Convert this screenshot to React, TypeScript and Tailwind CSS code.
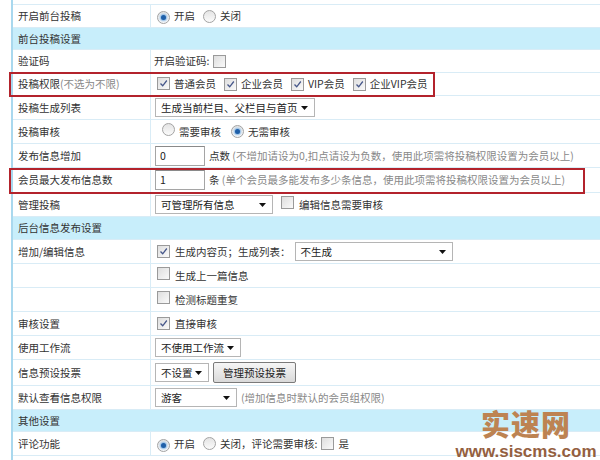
import React from 'react';

const FONT = '"Noto Sans CJK SC", "Liberation Sans", sans-serif';

function Radio({ checked = false }: { checked?: boolean }) {
  return (
    <span className="inline-flex h-[13px] w-[13px] shrink-0 items-center justify-center rounded-full border border-[#a3a3a3] bg-gradient-to-b from-[#e4e4e4] to-[#fbfbfb]">
      {checked && <span className="h-[5px] w-[5px] rounded-full bg-[#1f5fa8] shadow-[0_0_2px_1px_#7fb4e6]" />}
    </span>
  );
}

function Check({ checked = false }: { checked?: boolean }) {
  return (
    <span className="inline-flex h-[13px] w-[13px] shrink-0 items-center justify-center border border-[#9a9a9a] bg-gradient-to-br from-[#dedede] to-[#fafafa]">
      {checked && (
        <svg width="9" height="9" viewBox="0 0 9 9">
          <path d="M1.5 4.5 L3.7 6.8 L7.8 1.5" fill="none" stroke="#46578a" strokeWidth="1.3" />
        </svg>
      )}
    </span>
  );
}

function Select({ text, className }: { text: string; className: string }) {
  return (
    <span className={`inline-flex h-[19px] items-center justify-between border border-[#b5b5b5] bg-white pl-[5px] pr-[6px] text-[#222] ${className}`}>
      <span>{text}</span>
      <svg width="7" height="4" viewBox="0 0 7 4">
        <path d="M0 0 H7 L3.5 4 Z" fill="#111" />
      </svg>
    </span>
  );
}

function Input({ value }: { value: string }) {
  return (
    <span className="inline-flex h-[20px] w-[50px] items-center border border-[#a5a5a5] border-t-[#8a8a8a] bg-white pl-[4px] text-[#222]">
      {value}
    </span>
  );
}

function Row({ h, label, children }: { h: string; label?: React.ReactNode; children?: React.ReactNode }) {
  return (
    <div className={`flex border-b border-[#d9ecf6] ${h}`}>
      <div className="flex w-[138px] shrink-0 items-center border-r border-[#d9ecf6] pl-[5px]">{label}</div>
      <div className="flex flex-1 items-center gap-[4px] pl-[4px]">{children}</div>
    </div>
  );
}

function Header({ h, text }: { h: string; text: string }) {
  return (
    <div className={`flex items-center border-b border-[#d9ecf6] bg-[#c8eefb] pl-[5px] ${h}`}>{text}</div>
  );
}

export default function App() {
  return (
    <div className="relative h-[460px] w-[600px] overflow-hidden bg-white text-[10.5px] text-[#333]" style={{ fontFamily: FONT }}>
      <div className="ml-[11px] w-[620px] border-l-2 border-[#a9d8ee]">
        <div className="h-[5px] border-b border-[#d9ecf6]" />
        <Row h="h-[23px]" label="开启前台投稿">
          <span className="ml-[2px]"><Radio checked /></span>
          <span className="mr-[4px]">开启</span>
          <Radio />
          <span>关闭</span>
        </Row>
        <Header h="h-[22px]" text="前台投稿设置" />
        <Row h="h-[23px]" label="验证码">
          <span className="-ml-[1px]">开启验证码:</span>
          <Check />
        </Row>
        <Row
          h="h-[23px]"
          label={
            <span>
              投稿权限<span className="text-[#888]">(不选为不限)</span>
            </span>
          }
        >
          <span className="ml-[2px]"><Check checked /></span>
          <span className="mr-[4px]">普通会员</span>
          <Check checked />
          <span className="mr-[4px]">企业会员</span>
          <Check checked />
          <span className="mr-[4px]">VIP会员</span>
          <Check checked />
          <span>企业VIP会员</span>
        </Row>
        <Row h="h-[24px]" label="投稿生成列表">
          <Select text="生成当前栏目、父栏目与首页" className="w-[160px]" />
        </Row>
        <Row h="h-[24px]" label="投稿审核">
          <span className="ml-[7px]"><Radio /></span>
          <span className="mr-[6px]">需要审核</span>
          <Radio checked />
          <span>无需审核</span>
        </Row>
        <Row h="h-[24px]" label="发布信息增加">
          <Input value="0" />
          <span>
            点数 <span className="text-[#888]">(不增加请设为0,扣点请设为负数，使用此项需将投稿权限设置为会员以上)</span>
          </span>
        </Row>
        <Row h="h-[25px]" label="会员最大发布信息数">
          <Input value="1" />
          <span>
            条 <span className="text-[#888]">(单个会员最多能发布多少条信息，使用此项需将投稿权限设置为会员以上)</span>
          </span>
        </Row>
        <Row h="h-[24px]" label="管理投稿">
          <Select text="可管理所有信息" className="w-[118px]" />
          <span className="ml-[4px]"><Check /></span>
          <span className="ml-[1px]">编辑信息需要审核</span>
        </Row>
        <Header h="h-[23px]" text="后台信息发布设置" />
        <Row h="h-[24px]" label="增加/编辑信息">
          <span className="ml-[2px]"><Check checked /></span>
          <span className="ml-[1px]">生成内容页；生成列表：</span>
          <Select text="不生成" className="w-[158px]" />
        </Row>
        <Row h="h-[24px]">
          <span className="ml-[2px]"><Check /></span>
          <span className="ml-[1px]">生成上一篇信息</span>
        </Row>
        <Row h="h-[24px]">
          <span className="ml-[2px]"><Check /></span>
          <span className="ml-[1px]">检测标题重复</span>
        </Row>
        <Row h="h-[24px]" label="审核设置">
          <span className="ml-[2px]"><Check checked /></span>
          <span className="ml-[1px]">直接审核</span>
        </Row>
        <Row h="h-[24px]" label="使用工作流">
          <Select text="不使用工作流" className="w-[86px]" />
        </Row>
        <Row h="h-[26px]" label="信息预设投票">
          <Select text="不设置" className="w-[54px]" />
          <span className="inline-flex h-[21px] w-[83px] items-center justify-center rounded-[2px] border border-[#7a7a7a] bg-gradient-to-b from-[#f6f6f6] to-[#d9d9d9] text-[#222]">
            管理预设投票
          </span>
        </Row>
        <Row h="h-[24px]" label="默认查看信息权限">
          <Select text="游客" className="w-[82px]" />
          <span className="text-[#888]">(增加信息时默认的会员组权限)</span>
        </Row>
        <Header h="h-[22px]" text="其他设置" />
        <Row h="h-[24px]" label="评论功能">
          <span className="ml-[2px]"><Radio checked /></span>
          <span className="mr-[4px]">开启</span>
          <Radio />
          <span>关闭，评论需要审核:</span>
          <Check />
          <span>是</span>
        </Row>
        <div className="h-[10px]" />
      </div>

      <div className="pointer-events-none absolute left-[9px] top-[72px] h-[25px] w-[426px] border-2 border-[#b3232c]" />
      <div className="pointer-events-none absolute left-[9px] top-[168px] h-[26px] w-[576px] border-2 border-[#b3232c]" />

      <div className="pointer-events-none absolute left-[455px] top-[409px] flex w-[142px] flex-col items-center leading-none">
        <span className="text-[29px] font-black tracking-[1px] text-[#bd8352]" style={{ fontFamily: FONT }}>
          实速网
        </span>
        <span className="mt-[5px] text-[17px] font-bold text-[#94603f]" style={{ fontFamily: '"Liberation Sans", sans-serif' }}>
          www.siscms.com
        </span>
      </div>
    </div>
  );
}
